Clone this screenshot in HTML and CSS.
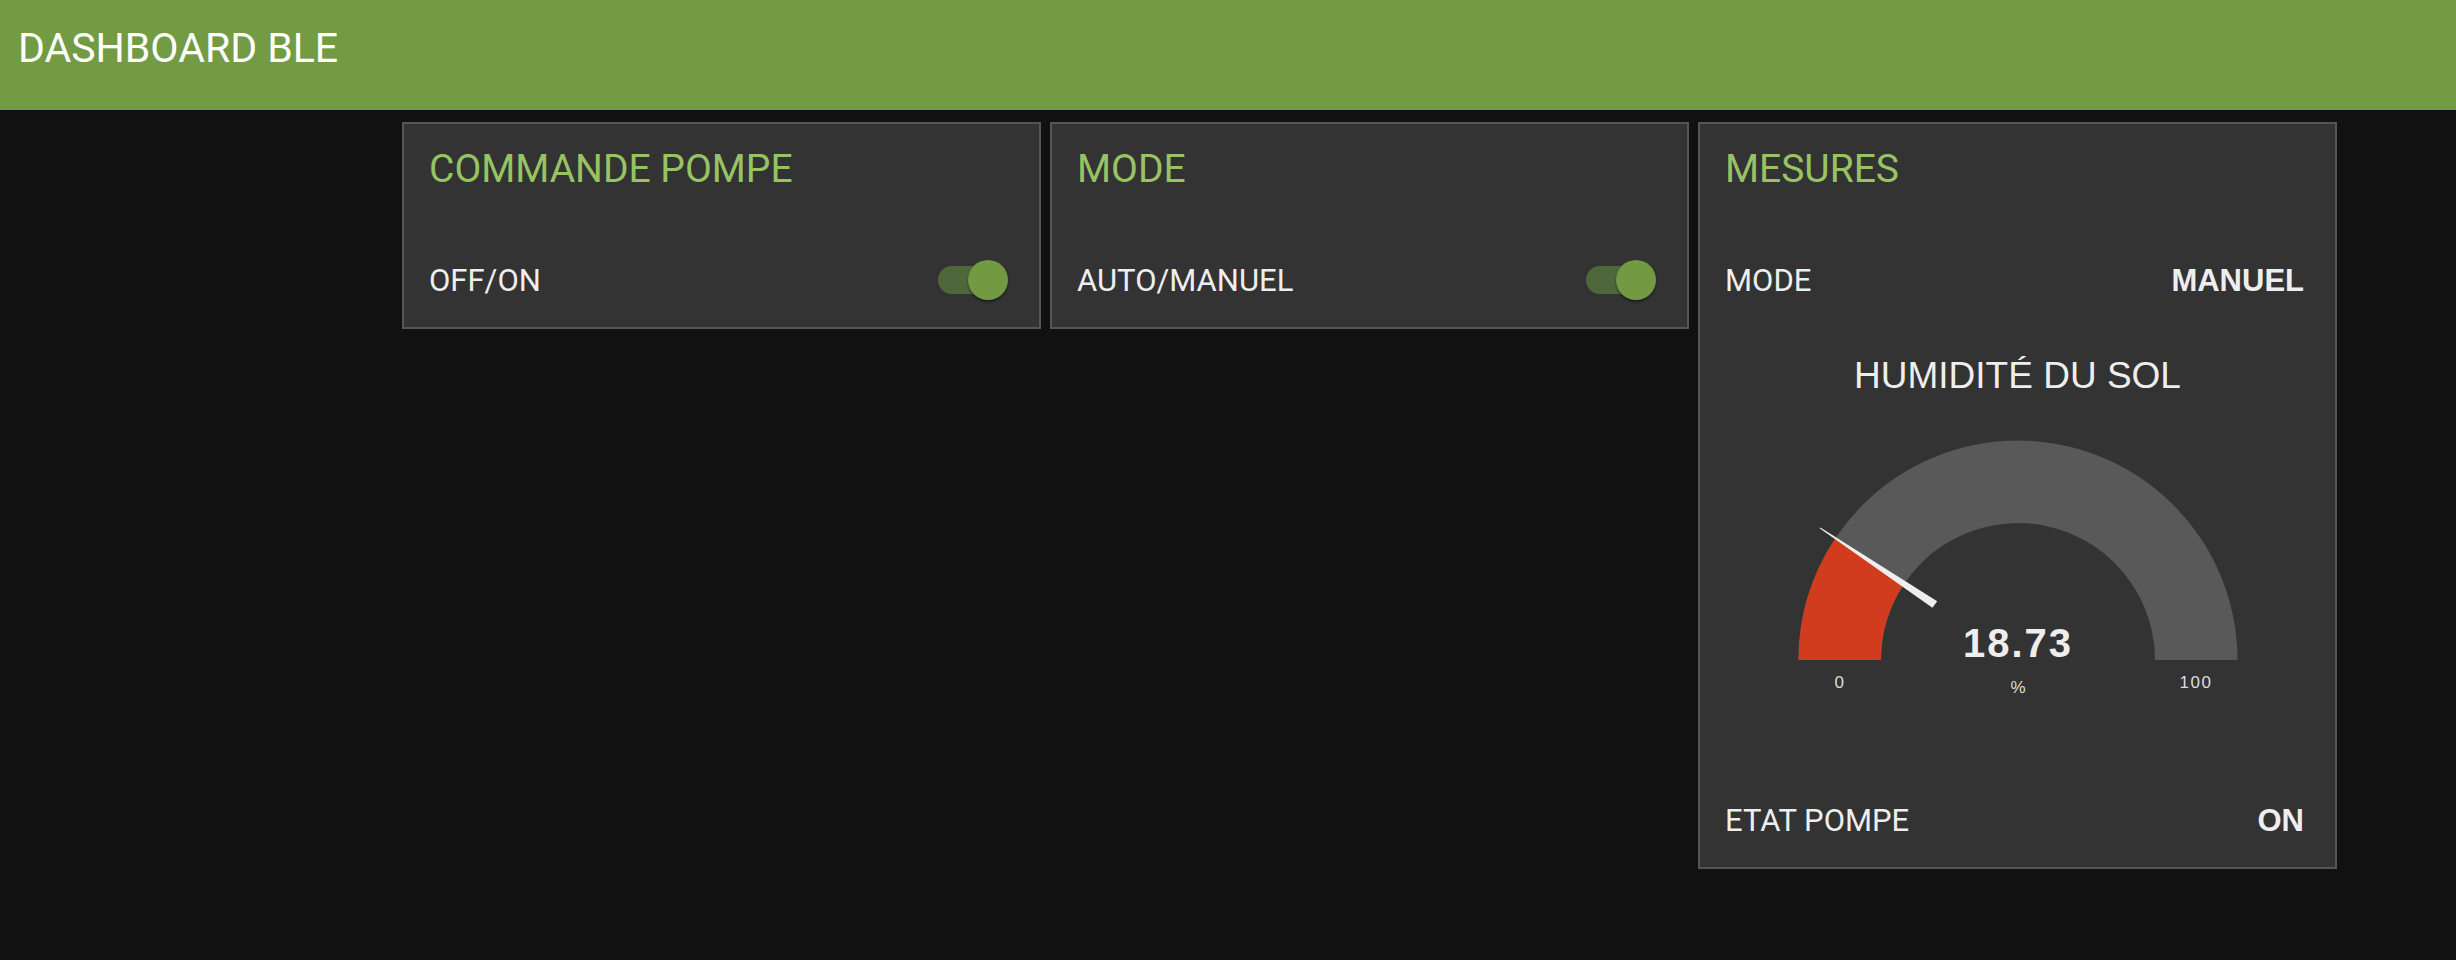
FILE: index.html
```html
<!DOCTYPE html>
<html lang="fr">
<head>
<meta charset="utf-8">
<title>Dashboard BLE</title>
<link rel="stylesheet" href="styles.css">
</head>
<body>
<header class="topbar"><span class="app-title">DASHBOARD BLE</span></header>
<main class="board">
  <section class="card">
    <h2 class="card-title">COMMANDE POMPE</h2>
    <div class="row">
      <span class="label">OFF/ON</span>
      <span class="toggle"><span class="track"></span><span class="thumb"></span></span>
    </div>
  </section>
  <section class="card">
    <h2 class="card-title">MODE</h2>
    <div class="row">
      <span class="label">AUTO/MANUEL</span>
      <span class="toggle"><span class="track"></span><span class="thumb"></span></span>
    </div>
  </section>
  <section class="card">
    <h2 class="card-title">MESURES</h2>
    <div class="row">
      <span class="label">MODE</span>
      <span class="value">MANUEL</span>
    </div>
    <div class="gauge-title">HUMIDITÉ DU SOL</div>
    <svg class="gauge" viewBox="0 0 480 275" width="480" height="275">
      <path class="arc-bg" d="M 20.5 230 A 219.5 219.5 0 0 1 459.5 230 L 377 230 A 137 137 0 0 0 103 230 Z"/>
      <path class="arc-val" d="M 20.5 230 A 219.5 219.5 0 0 1 57.4 108.2 L 126 154 A 137 137 0 0 0 103 230 Z"/>
      <polygon class="needle" points="159.2,171.3 154.4,177.7 41.6,98.3 42.4,97.5"/>
      <text class="g-value" x="240" y="227">18.73</text>
      <text class="g-label" x="62" y="258">0</text>
      <text class="g-label" x="418" y="258">100</text>
      <text class="g-unit" x="240" y="263">%</text>
    </svg>
    <div class="row row-bottom">
      <span class="label">ETAT POMPE</span>
      <span class="value">ON</span>
    </div>
  </section>
</main>
</body>
</html>
```

FILE: styles.css
```css
html, body {
  margin: 0;
  padding: 0;
}

body {
  background: #111111;
  color: #eeeeee;
  font-family: Roboto, "Liberation Sans", sans-serif;
  min-height: 960px;
}

.topbar {
  height: 110px;
  box-sizing: border-box;
  padding: 24px 0 0 18px;
  background: #729b44;
}

.app-title {
  display: block;
  font-size: 41px;
  line-height: 48px;
  color: #ffffff;
}

.board {
  display: flex;
  align-items: flex-start;
  gap: 9px;
  padding: 12px 0 0 402px;
}

.card {
  width: 639px;
  box-sizing: border-box;
  border: 2px solid #555555;
  background: #333333;
  padding: 21px 0 18px;
}

.card-title {
  margin: 0;
  padding: 0 31px 0 25px;
  font-size: 39px;
  font-weight: 400;
  line-height: 48px;
  color: #97c462;
}

.row {
  display: flex;
  justify-content: space-between;
  align-items: center;
  height: 56px;
  margin-top: 60px;
  padding: 0 31px 0 25px;
  font-size: 31px;
  line-height: 56px;
}

.value {
  font-family: "Liberation Sans", Arial, sans-serif;
  font-weight: 700;
  font-size: 31px;
}

.toggle {
  position: relative;
  width: 70px;
  height: 40px;
  margin-bottom: 2px;
}

.track {
  position: absolute;
  left: 0;
  top: 6px;
  width: 64px;
  height: 28px;
  border-radius: 14px;
  background: #4f673b;
}

.thumb {
  position: absolute;
  right: 0;
  top: 0;
  width: 40px;
  height: 40px;
  border-radius: 50%;
  background: #729a43;
  box-shadow: 0 2px 3px rgba(0, 0, 0, 0.35), 0 1px 1px rgba(0, 0, 0, 0.2);
}

.gauge-title {
  margin-top: 45px;
  text-align: center;
  font-family: "Liberation Sans", Arial, sans-serif;
  font-size: 37px;
  line-height: 44px;
  color: #eeeeee;
}

.gauge {
  display: block;
  margin: 32px auto 0;
  width: 480px;
  height: 275px;
  overflow: visible;
}

.arc-bg {
  fill: #595959;
}

.arc-val {
  fill: #d13c1f;
}

.needle {
  fill: #eeeeee;
}

.g-value {
  font-family: "Liberation Sans", Arial, sans-serif;
  font-weight: 700;
  font-size: 40px;
  letter-spacing: 2px;
  fill: #eeeeee;
  text-anchor: middle;
}

.g-label {
  font-family: "Liberation Sans", Arial, sans-serif;
  font-size: 17px;
  letter-spacing: 1.5px;
  fill: #dddddd;
  text-anchor: middle;
}

.g-unit {
  font-family: "Liberation Sans", Arial, sans-serif;
  font-size: 17px;
  fill: #dddddd;
  text-anchor: middle;
}

.row-bottom {
  margin-top: 88px;
}
```
